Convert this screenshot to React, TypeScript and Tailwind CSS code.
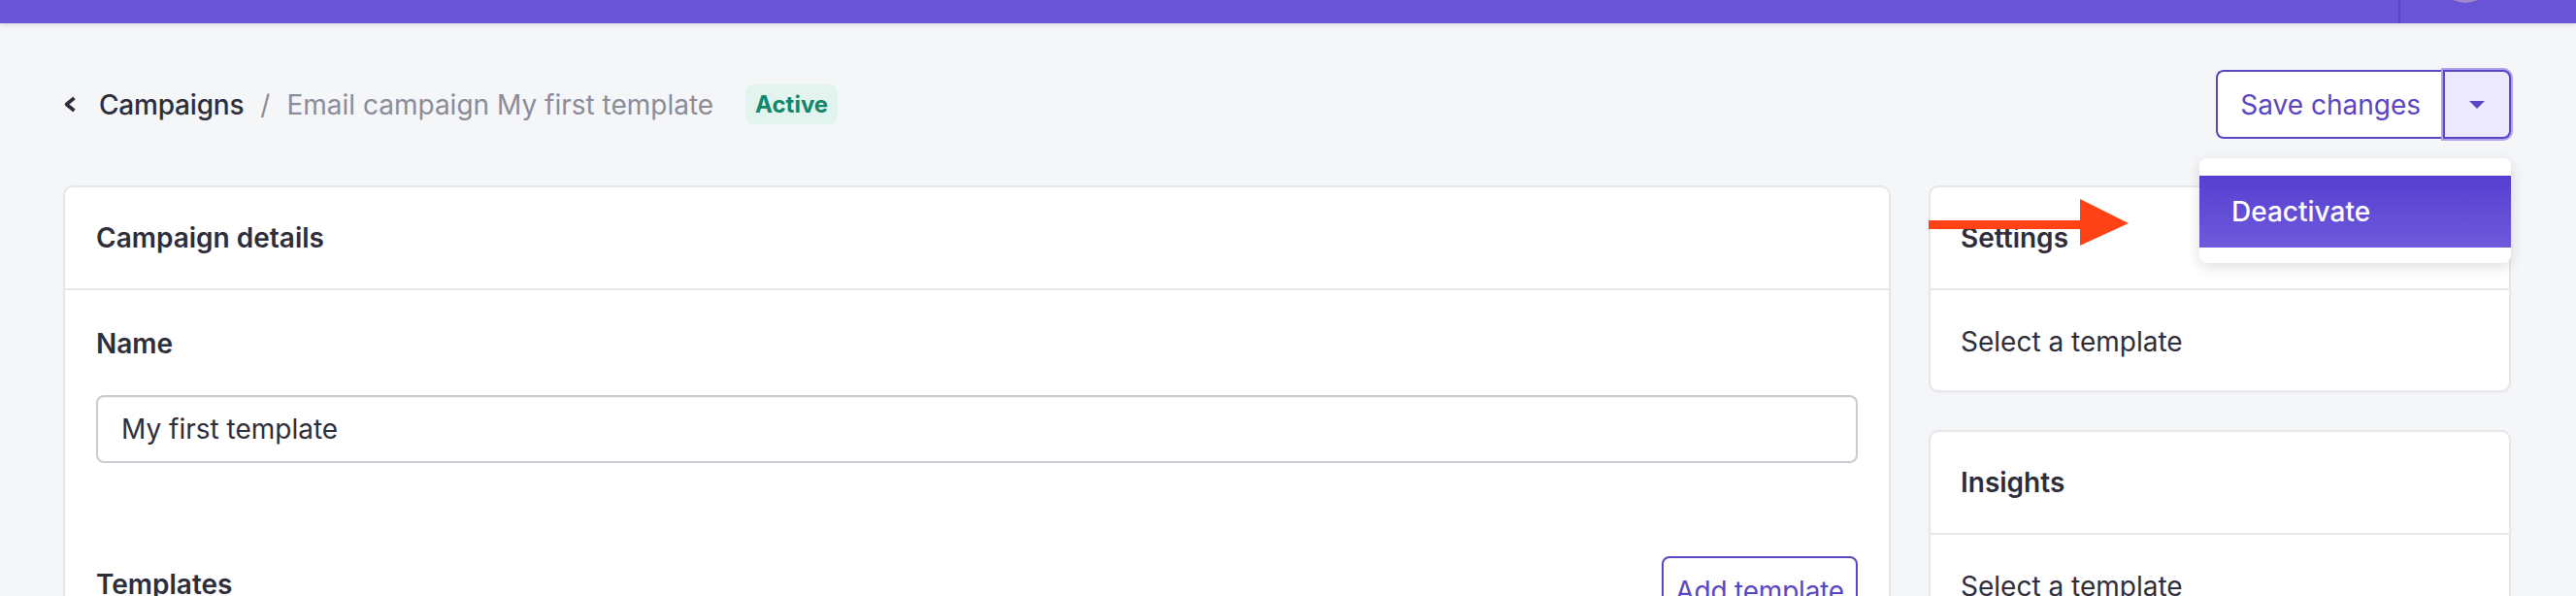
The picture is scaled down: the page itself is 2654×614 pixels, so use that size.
import React from "react";

const purple = "#5B45C3";

const SideCard = ({
  title,
  body,
  children,
}: {
  title: string;
  body: string;
  children?: React.ReactNode;
}) => (
  <section className="relative rounded-[10px] border-2 border-[#E6E7EB] bg-white shadow-[0_1px_2px_rgba(0,0,0,0.04)]">
    <div className="flex h-[106px] items-center border-b-2 border-[#E6E7EB] px-[31px] text-[28px] font-semibold leading-[40px]">
      {title}
    </div>
    <div className="flex h-[103px] items-center px-[31px] pt-[3px] text-[28px] leading-[40px]">
      {body}
    </div>
    {children}
  </section>
);

export default function App() {
  return (
    <div className="min-h-screen w-full bg-[#F5F6F8] font-['Inter',sans-serif] text-[#2E2D3A]">
      {/* top nav, mostly cropped out of the shot */}
      <header className="flex h-[24px] items-start justify-end gap-[39px] overflow-hidden bg-[#6953D6] pr-[86px] shadow-[0_2px_5px_rgba(40,30,90,0.12)]">
        <div className="h-full w-[2px] bg-[#5A43C6]" />
        <div className="-mt-[53px] h-[56px] w-[56px] rounded-full bg-[#A487CC]" />
      </header>

      <main className="pl-[65px] pr-[67px]">
        <div className="mt-[48px] flex h-[71px] items-center justify-between">
          <nav className="flex items-center text-[28px] leading-[40px]">
            <svg width="14" height="17" viewBox="0 0 14 17" fill="none">
              <path
                d="M11.5 2 L3.5 8.5 L11.5 15"
                stroke="#2E2D3A"
                strokeWidth="3.6"
                strokeLinejoin="round"
              />
            </svg>
            <span className="ml-[23px] font-medium tracking-[-0.2px]">Campaigns</span>
            <span className="mx-[17px] text-[#8B8C98]">/</span>
            <span className="text-[#8B8C98]">Email campaign My first template</span>
            <span className="ml-[33px] rounded-[8px] bg-[#E3F4EF] px-[10px] text-[24px] font-bold leading-[41px] text-[#11876B]">
              Active
            </span>
          </nav>

          <div className="relative flex h-[71px]">
            <button
              className="rounded-l-[8px] border-2 border-r-0 bg-white px-[23px] text-[28px] leading-[40px]"
              style={{ borderColor: purple, color: purple }}
            >
              Save changes
            </button>
            <button className="flex w-[70px] items-center justify-center rounded-r-[8px] border-2 border-[#5B45C3] bg-[#ECE8FD] shadow-[0_0_0_2px_#AFA2EC]">
              <svg width="16" height="8" viewBox="0 0 16 8">
                <path d="M0 0 H16 L8 8 Z" fill={purple} />
              </svg>
            </button>

            <div className="absolute right-0 top-[91px] z-10 w-[321px] rounded-[8px] bg-white pb-[16px] pt-[18px] shadow-[0_4px_14px_rgba(30,30,60,0.14)]">
              <div className="flex h-[74px] items-center bg-gradient-to-b from-[#563ED0] to-[#6E5ADB] px-[33px] text-[28px] font-medium leading-[40px] text-white">
                Deactivate
              </div>
            </div>
          </div>
        </div>

        <div className="mt-[48px] grid grid-cols-[1fr_600px] items-start gap-[39px]">
          <section className="rounded-[10px] border-2 border-[#E6E7EB] bg-white pb-[40px] shadow-[0_1px_2px_rgba(0,0,0,0.04)]">
            <div className="flex h-[106px] items-center border-b-2 border-[#E6E7EB] px-[32px] text-[28px] font-semibold leading-[40px]">
              Campaign details
            </div>
            <div className="px-[32px] pt-[35px]">
              <div className="text-[28px] font-semibold leading-[40px]">Name</div>
              <div className="mt-[33px] flex h-[70px] items-center rounded-[8px] border-2 border-[#C9CBD3] px-[24px] text-[28px] leading-[40px] shadow-[inset_0_1px_1px_rgba(0,0,0,0.05)]">
                My first template
              </div>
              <div className="mt-[96px] flex items-start justify-between">
                <div className="mt-[9px] text-[28px] font-semibold leading-[40px]">
                  Templates
                </div>
                <button
                  className="h-[71px] rounded-[8px] border-2 px-[12px] text-[28px] leading-[40px] tracking-[-0.2px]"
                  style={{ borderColor: purple, color: purple }}
                >
                  Add template
                </button>
              </div>
            </div>
          </section>

          <div className="flex flex-col gap-[39px]">
            <SideCard title="Settings" body="Select a template">
              {/* red annotation arrow */}
              <svg
                className="absolute left-[-2px] top-[12px]"
                width="206"
                height="48"
                viewBox="0 0 206 48"
              >
                <rect x="0" y="22" width="158" height="9" fill="#FF4216" />
                <path d="M156 0 L206 25 L156 48 Z" fill="#FF4216" />
              </svg>
            </SideCard>
            <SideCard title="Insights" body="Select a template" />
          </div>
        </div>
      </main>
    </div>
  );
}
